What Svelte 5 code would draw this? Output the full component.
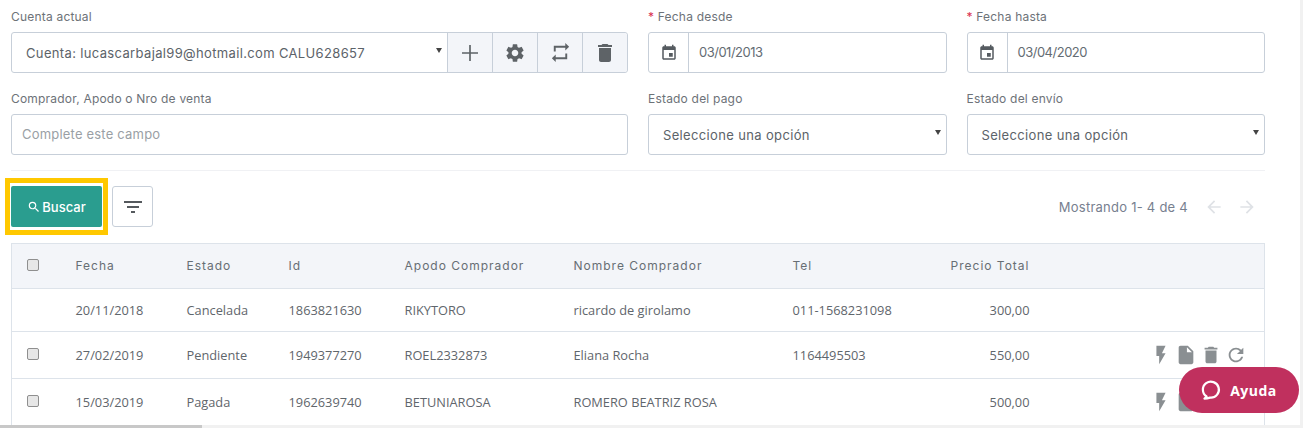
<script>
  const rows = [
    { fecha: '20/11/2018', estado: 'Cancelada', id: '1863821630', apodo: 'RIKYTORO', nombre: 'ricardo de girolamo', tel: '011-1568231098', total: '300,00', open: false },
    { fecha: '27/02/2019', estado: 'Pendiente', id: '1949377270', apodo: 'ROEL2332873', nombre: 'Eliana Rocha', tel: '1164495503', total: '550,00', open: true },
    { fecha: '15/03/2019', estado: 'Pagada', id: '1962639740', apodo: 'BETUNIAROSA', nombre: 'ROMERO BEATRIZ ROSA', tel: '', total: '500,00', open: true }
  ]

  const icons = {
    settings: 'M19.14 12.94c.04-.3.06-.61.06-.94 0-.32-.02-.64-.07-.94l2.03-1.58a.49.49 0 0 0 .12-.61l-1.92-3.32a.488.488 0 0 0-.59-.22l-2.39.96c-.5-.38-1.03-.7-1.62-.94l-.36-2.54a.484.484 0 0 0-.48-.41h-3.84c-.24 0-.43.17-.47.41l-.36 2.54c-.59.24-1.13.57-1.62.94l-2.39-.96c-.22-.08-.47 0-.59.22L2.74 8.87c-.12.21-.08.47.12.61l2.03 1.58c-.05.3-.09.63-.09.94s.02.64.07.94l-2.03 1.58a.49.49 0 0 0-.12.61l1.92 3.32c.12.22.37.29.59.22l2.39-.96c.5.38 1.03.7 1.62.94l.36 2.54c.05.24.24.41.48.41h3.84c.24 0 .44-.17.47-.41l.36-2.54c.59-.24 1.13-.56 1.62-.94l2.39.96c.22.08.47 0 .59-.22l1.92-3.32c.12-.22.07-.47-.12-.61l-2.01-1.58zM12 15.6c-1.98 0-3.6-1.62-3.6-3.6s1.62-3.6 3.6-3.6 3.6 1.62 3.6 3.6-1.62 3.6-3.6 3.6z',
    add: 'M21.6 13H13v8.6h-2V13H2.4v-2H11V2.4h2V11h8.6z',
    repeat: 'M7 7h10v3l4-4-4-4v3H5v6h2V7zm10 10H7v-3l-4 4 4 4v-3h12v-6h-2v4z',
    trash: 'M6 19c0 1.1.9 2 2 2h8c1.1 0 2-.9 2-2V7H6v12zM19 4h-3.5l-1-1h-5l-1 1H5v2h14V4z',
    event: 'M17 12h-5v5h5v-5zM16 1v2H8V1H6v2H5c-1.11 0-1.99.9-1.99 2L3 19c0 1.1.89 2 2 2h14c1.1 0 2-.9 2-2V5c0-1.1-.9-2-2-2h-1V1h-2zm3 18H5V8h14v11z',
    search: 'M15.5 14h-.79l-.28-.27A6.471 6.471 0 0 0 16 9.5 6.5 6.5 0 1 0 9.5 16c1.61 0 3.09-.59 4.23-1.57l.27.28v.79l5 4.99L20.49 19l-4.99-5zm-6 0C7.01 14 5 11.99 5 9.5S7.01 5 9.5 5 14 7.01 14 9.5 11.99 14 9.5 14z',
    filter: 'M10 18h4v-2h-4v2zM3 6v2h18V6H3zm3 7h12v-2H6v2z',
    back: 'M20 11H7.83l5.59-5.59L12 4l-8 8 8 8 1.41-1.41L7.83 13H20v-2z',
    next: 'M12 4l-1.41 1.41L16.17 11H4v2h12.17l-5.58 5.59L12 20l8-8z',
    flash: 'M7 2v11h3v9l7-12h-4l4-8z',
    file: 'M6 2c-1.1 0-1.99.9-1.99 2L4 20c0 1.1.89 2 2 2h12c1.1 0 2-.9 2-2V8l-6-6H6zm7 7V3.5L18.5 9H13z',
    refresh: 'M17.65 6.35A7.958 7.958 0 0 0 12 4c-4.42 0-7.99 3.58-7.99 8s3.57 8 7.99 8c3.73 0 6.84-2.55 7.73-6h-2.08A5.99 5.99 0 0 1 12 18c-3.31 0-6-2.69-6-6s2.69-6 6-6c1.66 0 3.14.69 4.22 1.78L13 11h7V4l-2.35 2.35z'
  }
</script>

{#snippet icon(name, size, cls = '')}
  <svg class={cls} width={size} height={size} viewBox="0 0 24 24" fill="currentColor"><path d={icons[name]} /></svg>
{/snippet}

<div class="page">
  <div class="filters">
    <div class="field">
      <span class="label">Cuenta actual</span>
      <div class="account">
        <div class="select borderless"><span>Cuenta: lucascarbajal99@hotmail.com CALU628657</span></div>
        <button class="addon">{@render icon('add', 20)}</button>
        <button class="addon">{@render icon('settings', 22)}</button>
        <button class="addon">{@render icon('repeat', 23)}</button>
        <button class="addon">{@render icon('trash', 24)}</button>
      </div>
    </div>
    <div class="field">
      <span class="label"><i>*</i> Fecha desde</span>
      <div class="date">
        <span class="cal">{@render icon('event', 18)}</span>
        <span class="value">03/01/2013</span>
      </div>
    </div>
    <div class="field">
      <span class="label"><i>*</i> Fecha hasta</span>
      <div class="date">
        <span class="cal">{@render icon('event', 18)}</span>
        <span class="value">03/04/2020</span>
      </div>
    </div>
    <div class="field">
      <span class="label">Comprador, Apodo o Nro de venta</span>
      <div class="input">Complete este campo</div>
    </div>
    <div class="field">
      <span class="label">Estado del pago</span>
      <div class="select wide"><span>Seleccione una opción</span></div>
    </div>
    <div class="field">
      <span class="label">Estado del envío</span>
      <div class="select wide"><span>Seleccione una opción</span></div>
    </div>
  </div>

  <div class="toolbar">
    <div class="highlight">
      <button class="search">{@render icon('search', 14)}Buscar</button>
    </div>
    <button class="filter">{@render icon('filter', 24)}</button>
    <div class="paging">
      <span>Mostrando 1- 4 de 4</span>
      {@render icon('back', 20)}
      {@render icon('next', 20)}
    </div>
  </div>

  <table>
    <colgroup>
      <col style="width:52px" /><col style="width:111px" /><col style="width:102px" /><col style="width:116px" />
      <col style="width:169px" /><col style="width:219px" /><col style="width:120px" /><col style="width:141px" /><col />
    </colgroup>
    <thead>
      <tr>
        <th class="check"><span class="box"></span></th>
        <th>Fecha</th>
        <th>Estado</th>
        <th>Id</th>
        <th>Apodo Comprador</th>
        <th>Nombre Comprador</th>
        <th>Tel</th>
        <th class="num">Precio Total</th>
        <th></th>
      </tr>
    </thead>
    <tbody>
      {#each rows as row}
        <tr class:tall={row.open}>
          <td class="check">{#if row.open}<span class="box"></span>{/if}</td>
          <td>{row.fecha}</td>
          <td>{row.estado}</td>
          <td>{row.id}</td>
          <td>{row.apodo}</td>
          <td>{row.nombre}</td>
          <td>{row.tel}</td>
          <td class="num">{row.total}</td>
          <td class="actions">
            {#if row.open}
              <div class="row-icons">
                {@render icon('flash', 22)}
                {@render icon('file', 22)}
                {@render icon('trash', 22)}
                {@render icon('refresh', 22)}
              </div>
            {/if}
          </td>
        </tr>
      {/each}
    </tbody>
  </table>
</div>

<button class="help">
  <svg width="22" height="22" viewBox="0 0 22 22" fill="none" stroke="currentColor" stroke-width="2.2"><path d="M5.6 17.4A8 8 0 1 1 9 18.6c-1.6.6-3.4 1-5.6 1 .9-.6 1.7-1.3 2.2-2.2z" stroke-linejoin="round" /></svg>
  Ayuda
</button>

<div class="scroll-x"><span></span></div>
<div class="scroll-y"></div>

<style>
  :global(body) {
    margin: 0;
    background: #fff;
    overflow: hidden;
  }

  .page {
    box-sizing: border-box;
    width: 1254px;
    margin-left: 11px;
    font-family: Inter, "Open Sans", sans-serif;
    color: #646c73;
  }

  .filters {
    display: grid;
    grid-template-columns: 617px 298.5px 298.5px;
    column-gap: 20px;
    row-gap: 17px;
    padding-top: 8px;
    padding-bottom: 15px;
    border-bottom: 1px solid #f0f1f4;
  }

  .field {
    display: flex;
    flex-direction: column;
  }

  .label {
    height: 24px;
    line-height: 18px;
    font-size: 12px;
    letter-spacing: .2px;
    color: #6d7278;
  }

  .label i {
    font-style: normal;
    color: #d9304f;
  }

  .account,
  .date,
  .input,
  .select.wide {
    box-sizing: border-box;
    height: 41px;
    border: 1px solid #c7cfd9;
    border-radius: 3px;
    background: #fff;
  }

  .account {
    display: flex;
  }

  .select {
    position: relative;
    display: flex;
    align-items: center;
    font-size: 13px;
    letter-spacing: .35px;
    color: #5c6369;
  }

  .select::after {
    content: "";
    position: absolute;
    right: 5px;
    top: 15px;
    border-style: solid;
    border-width: 5px 3px 0;
    border-color: #444 transparent transparent;
  }

  .select.borderless {
    flex: 1;
    padding-left: 14px;
  }

  .select.wide {
    padding-left: 14px;
  }

  .addon {
    width: 45px;
    padding: 0;
    border: 0;
    border-left: 1px solid #c7cfd9;
    background: #f3f5f9;
    color: #5e6367;
    display: flex;
    align-items: center;
    justify-content: center;
  }

  .addon:last-child {
    border-radius: 0 3px 3px 0;
  }

  .date {
    display: flex;
    align-items: stretch;
    font-size: 13px;
  }

  .cal {
    width: 39px;
    display: flex;
    align-items: center;
    justify-content: center;
    border-right: 1px solid #c7cfd9;
    color: #555b60;
  }

  .value {
    padding-left: 10px;
    line-height: 38px;
    letter-spacing: -.5px;
    color: #646c73;
  }

  .input {
    padding-left: 10px;
    line-height: 39px;
    font-size: 13px;
    letter-spacing: .2px;
    color: #9a9fa5;
  }

  .toolbar {
    display: flex;
    align-items: center;
    margin-top: 15px;
    height: 41px;
  }

  .highlight {
    flex: none;
    margin-left: -6px;
    padding: 3px 1px;
    border: 5px solid #ffc800;
    background: #fff;
  }

  .search {
    display: flex;
    align-items: center;
    justify-content: center;
    gap: 1px;
    width: 91px;
    height: 41px;
    padding: 0;
    border: 0;
    border-radius: 2px;
    background: #2a9d8f;
    color: #fff;
    font: 500 13px Inter, sans-serif;
  }

  .filter {
    display: flex;
    align-items: center;
    justify-content: center;
    width: 41px;
    height: 41px;
    margin-left: 4px;
    padding: 0;
    border: 1px solid #c7cfd9;
    border-radius: 3px;
    background: #fff;
    color: #55595d;
  }

  .paging {
    margin-left: auto;
    padding-right: 8px;
    display: flex;
    align-items: center;
    gap: 13px;
    font-size: 13px;
    color: #77808f;
  }

  .paging span {
    margin-right: 3px;
    letter-spacing: .25px;
  }

  .paging svg {
    color: #dfe2e6;
  }

  table {
    width: 1254px;
    margin-top: 16px;
    table-layout: fixed;
    border-collapse: collapse;
    border: 1px solid #dde3ea;
    font-family: "Open Sans", sans-serif;
    font-size: 12.8px;
    color: #5f666c;
  }

  th {
    height: 42px;
    padding: 0 12px 2px;
    text-align: left;
    font: 400 12px Inter, sans-serif;
    letter-spacing: 1px;
    color: #676e74;
    background: #f3f5f9;
    border-bottom: 1px solid #dde3ea;
  }

  td {
    height: 42px;
    padding: 0 12px;
    border-bottom: 1px solid #dde3ea;
    white-space: nowrap;
  }

  tr.tall td {
    height: 46px;
  }

  th.check,
  td.check,
  tr.tall td.check {
    height: 40px;
    padding: 0 0 2px 15px;
  }

  .box {
    display: block;
    box-sizing: border-box;
    width: 12px;
    height: 12px;
    border: 1px solid #8f8f8f;
    border-radius: 2px;
    background: #e7e7e7;
  }

  .num {
    text-align: right;
  }

  .row-icons {
    display: flex;
    justify-content: flex-end;
    gap: 3px;
    padding-right: 5px;
    color: #8a8f92;
  }

  .help {
    position: fixed;
    left: 1179px;
    top: 367px;
    width: 120px;
    height: 46px;
    padding: 0;
    border: 0;
    border-radius: 23px;
    background: #c0305e;
    color: #fff;
    display: flex;
    align-items: center;
    justify-content: center;
    gap: 7px;
    font: 700 14px "Open Sans", sans-serif;
    letter-spacing: .5px;
  }

  .scroll-x {
    position: fixed;
    left: 0;
    right: 0;
    bottom: 0;
    height: 3px;
    background: #f1f1f1;
  }

  .scroll-x span {
    display: block;
    width: 202px;
    height: 3px;
    background: #c8c8c8;
  }

  .scroll-y {
    position: fixed;
    top: 0;
    right: 0;
    bottom: 0;
    width: 3px;
    background: #f1f1f1;
  }
</style>
